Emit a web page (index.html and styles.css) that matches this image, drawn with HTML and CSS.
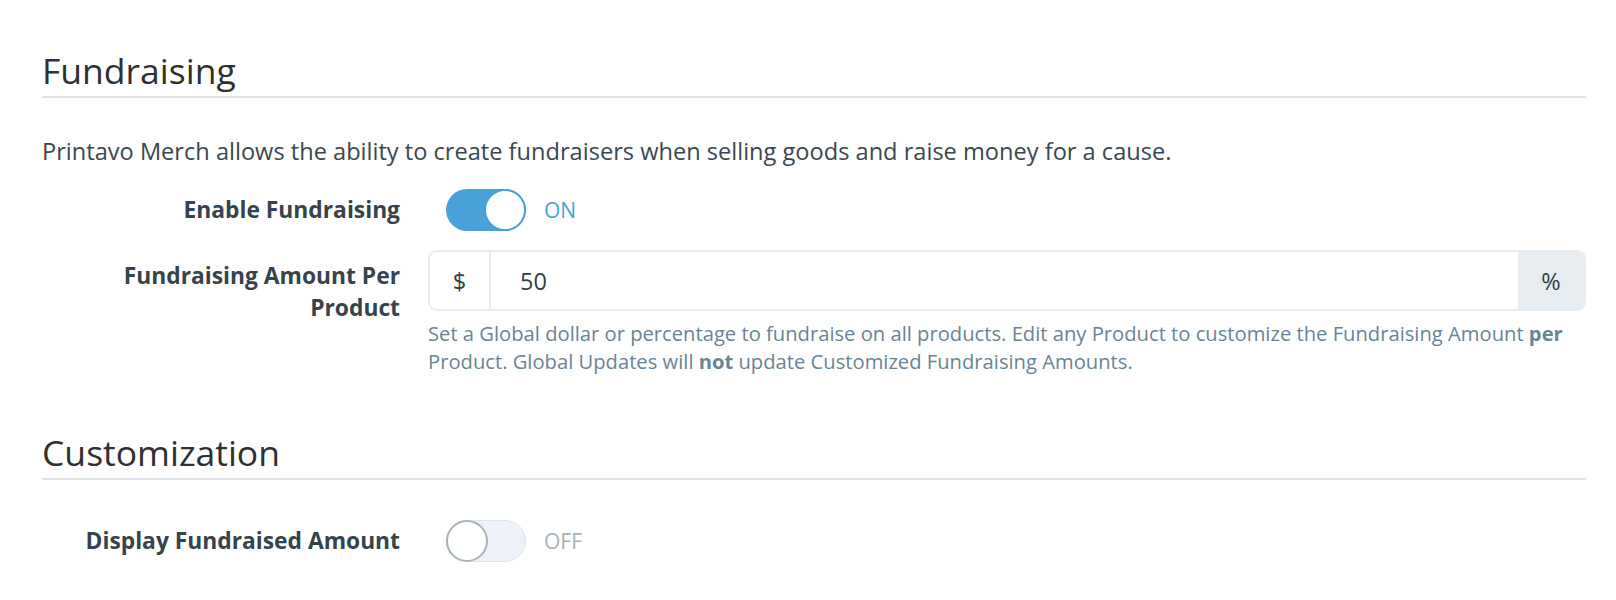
FILE: index.html
```html
<!DOCTYPE html>
<html>
<head>
<meta charset="utf-8">
<link rel="stylesheet" href="styles.css">
</head>
<body>
<div class="page">
  <section class="section">
    <h2 class="section-title">Fundraising</h2>
    <p class="intro">Printavo Merch allows the ability to create fundraisers when selling goods and raise money for a cause.</p>
    <div class="form-row row-toggle">
      <div class="label">Enable Fundraising</div>
      <div class="control">
        <span class="switch on"><span class="knob"></span></span>
        <span class="switch-text on-text">ON</span>
      </div>
    </div>
    <div class="form-row row-amount">
      <div class="label label-multi">Fundraising Amount Per<br>Product</div>
      <div class="control control-col">
        <div class="input-group">
          <span class="addon addon-left">$</span>
          <span class="input-field">50</span>
          <span class="addon addon-right">%</span>
        </div>
        <p class="help">Set a Global dollar or percentage to fundraise on all products. Edit any Product to customize the Fundraising Amount <b>per</b> Product. Global Updates will <b>not</b> update Customized Fundraising Amounts.</p>
      </div>
    </div>
  </section>
  <section class="section section-2">
    <h2 class="section-title">Customization</h2>
    <div class="form-row row-toggle row-display">
      <div class="label">Display Fundraised Amount</div>
      <div class="control">
        <span class="switch off"><span class="knob"></span></span>
        <span class="switch-text off-text">OFF</span>
      </div>
    </div>
  </section>
</div>
</body>
</html>
```
FILE: styles.css
```css
html, body {
  margin: 0;
  padding: 0;
  background: #ffffff;
}
body {
  font-family: "Open Sans", "Lato", "Liberation Sans", sans-serif;
  color: #3a4650;
}
.page {
  width: 1544px;
  padding: 50px 0 0 42px;
}
.section-title {
  margin: 0;
  font-weight: 400;
  font-size: 35.5px;
  line-height: 40px;
  color: #2f3033;
  padding-bottom: 6px;
  border-bottom: 2px solid #dde3e8;
}
.intro {
  margin: 40px 0 0 0;
  font-size: 23.6px;
  line-height: 26px;
  color: #3b4750;
}
.form-row {
  display: grid;
  grid-template-columns: 358px 1fr;
  column-gap: 28px;
}
.row-toggle {
  margin-top: 25px;
  align-items: center;
}
.row-amount {
  margin-top: 19px;
  align-items: start;
}
.label {
  text-align: right;
  font-weight: 700;
  font-size: 22.8px;
  line-height: 32px;
  color: #36434c;
}
.label-multi {
  padding-top: 10px;
}
.control {
  display: flex;
  align-items: center;
}
.control-col {
  flex-direction: column;
  align-items: stretch;
}
.switch {
  position: relative;
  box-sizing: border-box;
  width: 80px;
  height: 42px;
  border-radius: 21px;
  margin-left: 18px;
  display: inline-block;
}
.switch.on {
  background: #48a1d8;
}
.switch.off {
  background: #eef2f8;
  border: 1px solid #dde5ee;
}
.knob {
  position: absolute;
  top: 0;
  width: 42px;
  height: 42px;
  box-sizing: border-box;
  border-radius: 50%;
  background: #ffffff;
}
.switch.on .knob {
  right: 0;
  border: 2px solid #48a1d8;
}
.switch.off .knob {
  left: -1px;
  top: -1px;
  border: 2px solid #a8b4bc;
}
.switch-text {
  margin-left: 18px;
  font-size: 21px;
  line-height: 28px;
}
.on-text {
  color: #48a1d8;
}
.off-text {
  color: #a6b2ba;
}
.input-group {
  display: flex;
  height: 61px;
  box-sizing: border-box;
  border: 2px solid #e7ecf1;
  border-radius: 9px;
  overflow: hidden;
  font-size: 23.5px;
  color: #333d44;
}
.addon {
  display: flex;
  align-items: center;
  justify-content: center;
}
.addon-left {
  width: 59px;
  border-right: 2px solid #e7ecf1;
}
.input-field {
  flex: 1;
  display: flex;
  align-items: center;
  padding-left: 29px;
}
.addon-right {
  width: 66px;
  background: #e7ecf1;
}
.help {
  margin: 8px 0 0 0;
  font-size: 20.2px;
  line-height: 28px;
  color: #6a8494;
}
.help b {
  font-weight: 700;
}
.section-2 {
  margin-top: 57px;
}
.row-display {
  margin-top: 40px;
}
```
